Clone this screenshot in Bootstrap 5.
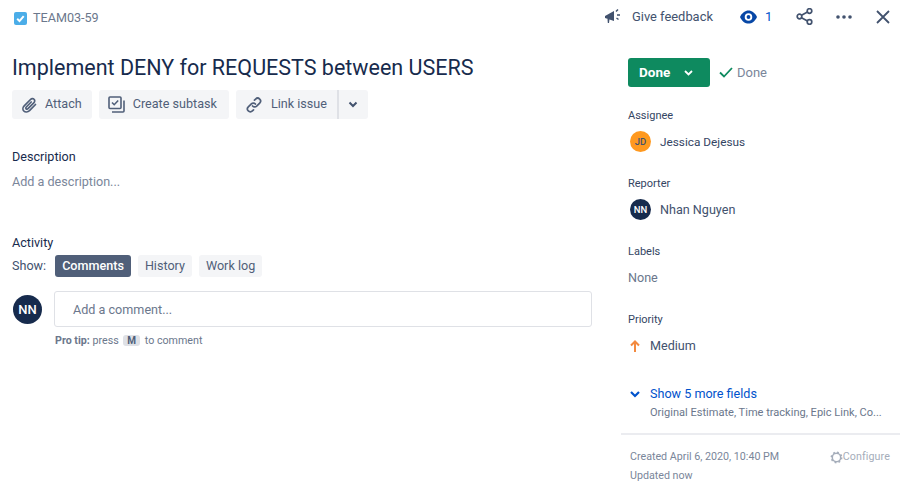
<!DOCTYPE html>
<html lang="en">
<head>
  <meta charset="UTF-8">
  <title>TEAM03-59</title>
  <link href="https://cdn.jsdelivr.net/npm/bootstrap@5.3.0/dist/css/bootstrap.min.css" rel="stylesheet">
  <style>
    html, body {
      height: 100%;
      margin: 0;
      background: #fff;
      overflow: hidden;
      font-family: Roboto, "Liberation Sans", sans-serif;
      font-size: 12.6px;
      color: #42526e;
    }
    .issue-shell { width: 911px; height: 494px; }
    .main-col { width: 621px; padding: 0 29px 0 12px; }
    .side-col { width: 279px; }

    .top-left { height: 35px; padding: 1px 0 0 2px; gap: 6px; color: #6b778c; }
    .top-right { height: 33px; margin-left: -17px; white-space: nowrap; }
    .issue-title { font-size: 21.5px; font-weight: 400; line-height: 30px; color: #172b4d; margin: 18px 0 7px; }
    .act-row { gap: 7px; }
    .act-btn {
      height: 29px;
      background: #f4f5f7;
      color: #505f79;
      border-radius: 3px;
      padding: 0 11px 0 9px;
      gap: 8px;
    }
    .btn-attach { padding-right: 10px; gap: 7px; }
    .btn-subtask { padding-right: 12px; }
    .btn-split { width: 31px; margin-left: -7px; padding: 0; justify-content: center; border-left: 2px solid #dfe1e6; border-radius: 0 3px 3px 0; }
    .link-left { border-radius: 3px 0 0 3px; padding-right: 10px; }
    .sect-head { line-height: 20px; color: #172b4d; }
    .desc-head { margin-top: 28px; }
    .hint-text { line-height: 20px; color: #7a869a; margin-top: 5px; }
    .activity-head { margin-top: 41px; }
    .show-row { gap: 7px; margin-top: 2px; }
    .show-label { line-height: 20px; color: #42526e; margin-right: 2px; }
    .tab-pill { height: 22px; line-height: 21px; padding: 0 7px; border-radius: 3px; background: #f4f5f7; color: #505f79; }
    .tab-on { background: #505f79; color: #fff; font-weight: 500; }
    .comment-row { gap: 12px; margin-top: 14px; }
    .avatar-dot { border-radius: 50%; background: #172b4d; color: #fff; flex: none; display: flex; align-items: center; justify-content: center; font-weight: 500; }
    .avatar-big { width: 29px; height: 29px; font-size: 13px; margin: 4px 0 0 1px; }
    .avatar-small { width: 21px; height: 21px; font-size: 9.500px; }
    .avatar-orange { background: #ff991f; color: #42526e; }
    .comment-box { height: 36px; border: 1px solid #dfe1e6; border-radius: 3px; padding-left: 18px; line-height: 36px; color: #6b778c; }
    .pro-tip { font-size: 10.700px; line-height: 16px; color: #6b778c; margin: 6px 0 0 1px; }
    .key-cap { background: #dfe1e6; border-radius: 3px; padding: 0 4px; font-weight: 700; font-size: 10px; margin: 0 2px; color: #505f79; }

    .fb-text { margin: 0 27px 0 10px; font-size: 12.900px; }
    .watch-count { color: #0052cc; margin: 0 24px 0 8px; font-size: 13px; }
    .ic-dots { margin-left: 23px; }
    .ic-close { margin-left: 24px; }

    .status-row { margin: 25px 0 0 7px; }
    .status-btn { width: 82px; height: 29px; background: #0e8a5f; color: #fff; border-radius: 3px; font-weight: 700; padding-left: 11px; gap: 14px; font-size: 13.500px; }
    .status-tick { margin-left: 9px; }
    .status-text { margin-left: 4px; color: #7a869a; font-size: 13px; }

    .field-list { padding-left: 7px; }
    .field-name { font-size: 11px; line-height: 16px; color: #344563; margin-top: 24px; }
    .field-first { margin-top: 21px; }
    .field-val { line-height: 20px; color: #42526e; gap: 9px; margin: 7px 0 0 2px; }
    .val-jessica { font-size: 11.800px; color: #344563; }
    .val-none { margin-left: 0; margin-top: 8px; color: #6b778c; }
    .prio-row { margin-top: 8px; gap: 10px; }
    .show-more { color: #0052cc; line-height: 20px; gap: 10px; margin: 28px 0 0 2px; }
    .more-list { font-size: 11.050px; line-height: 16px; color: #6b778c; white-space: nowrap; margin: 1px 0 0 22px; }
    .meta-foot { border-top: 2px solid #ebecf0; font-size: 10.700px; line-height: 16px; color: #7a869a; padding: 14px 10px 0 9px; margin-top: 12px; }
    .foot-second { margin-top: 3px; }
    .cfg-link { color: #a5adba; letter-spacing: .1px; }
  </style>
</head>
<body>

<div class="issue-shell d-flex">
  <!-- left column -->
  <div class="main-col">
    <div class="top-left d-flex align-items-center">
      <svg width="13" height="13" viewBox="0 0 13 13"><rect width="13" height="13" rx="2" fill="#4bade8"/><path d="M3.200 6.800l2.300 2.300 4.200-5" fill="none" stroke="#fff" stroke-width="2"/></svg>
      <span>TEAM03-59</span>
    </div>
    <h1 class="issue-title">Implement DENY for REQUESTS between USERS</h1>
    <div class="d-flex act-row">
      <div class="act-btn btn-attach d-flex align-items-center">
        <svg width="17" height="18" viewBox="0 0 17 18" fill="none" stroke="#505f79" stroke-width="1.700" stroke-linecap="round"><path d="M14.500 8.500l-6 6.200c-1.700 1.600-4.300 1.800-5.700.3-1.300-1.300-1.100-3.600.4-5.100l6.300-6.400c1.100-1.100 2.700-1.200 3.600-.2.900.9.800 2.400-.3 3.500l-5.800 5.900c-.6.600-1.400.7-1.900.2-.5-.5-.4-1.300.2-1.900l4.900-5"/></svg>
        <span>Attach</span>
      </div>
      <div class="act-btn btn-subtask d-flex align-items-center">
        <svg width="17" height="17" viewBox="0 0 17 17" fill="none" stroke="#505f79" stroke-width="1.600"><rect x="1" y="1" width="12" height="11.500" rx="1"/><path d="M4 6.500l2.200 2.200 4-4.200"/><path d="M16 4.500v10.500a1 1 0 0 1-1 1H4"/></svg>
        <span>Create subtask</span>
      </div>
      <div class="act-btn link-left d-flex align-items-center">
        <svg width="18" height="18" viewBox="0 0 19 19" fill="none" stroke="#505f79" stroke-width="1.800" stroke-linecap="round"><path d="M8 10.500a3 3 0 0 0 4.300.2l3.200-3.200a3 3 0 0 0-4.300-4.300l-1.200 1.200"/><path d="M11 8.500a3 3 0 0 0-4.300-.2l-3.200 3.200a3 3 0 0 0 4.300 4.300l1.200-1.200"/></svg>
        <span>Link issue</span>
      </div>
      <div class="act-btn btn-split d-flex align-items-center">
        <svg width="10" height="7" viewBox="0 0 10 7" fill="none" stroke="#42526e" stroke-width="2"><path d="M1.500 1.500L5 5l3.500-3.500"/></svg>
      </div>
    </div>

    <div class="sect-head desc-head">Description</div>
    <div class="hint-text">Add a description...</div>

    <div class="sect-head activity-head">Activity</div>
    <div class="d-flex align-items-center show-row">
      <span class="show-label">Show:</span>
      <span class="tab-pill tab-on">Comments</span>
      <span class="tab-pill">History</span>
      <span class="tab-pill">Work log</span>
    </div>
    <div class="d-flex comment-row">
      <div class="avatar-dot avatar-big">NN</div>
      <div class="flex-grow-1">
        <div class="comment-box">Add a comment...</div>
        <div class="pro-tip"><b>Pro tip:</b> press <span class="key-cap">M</span> to comment</div>
      </div>
    </div>
  </div>

  <!-- right column -->
  <div class="side-col">
    <div class="top-right d-flex align-items-center">
      <svg width="18" height="18" viewBox="0 0 18 18" fill="#42526e"><path d="M1 8l9-5v10L1 10z"/><path d="M3.500 11l2 0-.5 4-1.200 0z"/><path d="M12 3.500l2-2M13 7h3M12.500 10l2 1.500" stroke="#42526e" stroke-width="1.500" fill="none"/></svg>
      <span class="fb-text">Give feedback</span>
      <svg width="17" height="14" viewBox="0 0 18 14"><path d="M0 7c2-4.500 5.500-7 9-7s7 2.500 9 7c-2 4.500-5.500 7-9 7s-7-2.500-9-7z" fill="#0747a6"/><circle cx="9" cy="7" r="3" fill="none" stroke="#fff" stroke-width="2"/></svg>
      <span class="watch-count">1</span>
      <svg width="17" height="17" viewBox="0 0 17 17" fill="none" stroke="#42526e" stroke-width="1.700"><circle cx="3.500" cy="8.500" r="2.300"/><circle cx="13.500" cy="3" r="2.300"/><circle cx="13.500" cy="14" r="2.300"/><path d="M5.500 7.300l6-3.200M5.500 9.700l6 3.200"/></svg>
      <svg class="ic-dots" width="16" height="4" viewBox="0 0 16 4" fill="#42526e"><circle cx="2" cy="2" r="1.800"/><circle cx="8" cy="2" r="1.800"/><circle cx="14" cy="2" r="1.800"/></svg>
      <svg class="ic-close" width="14" height="14" viewBox="0 0 14 14" fill="none" stroke="#42526e" stroke-width="1.800"><path d="M1 1l12 12M13 1L1 13"/></svg>
    </div>

    <div class="d-flex align-items-center status-row">
      <div class="status-btn d-flex align-items-center">
        <span>Done</span>
        <svg width="9" height="6" viewBox="0 0 9 6" fill="none" stroke="#fff" stroke-width="1.800"><path d="M1 1l3.500 3.500L8 1"/></svg>
      </div>
      <svg class="status-tick" width="14" height="11" viewBox="0 0 14 11" fill="none" stroke="#0e8a5f" stroke-width="1.800"><path d="M1 5.500l4 4 8-8.500"/></svg>
      <span class="status-text">Done</span>
    </div>

    <div class="field-list">
      <div class="field-name field-first">Assignee</div>
      <div class="d-flex align-items-center field-val">
        <div class="avatar-dot avatar-small avatar-orange">JD</div><span class="val-jessica">Jessica Dejesus</span>
      </div>
      <div class="field-name">Reporter</div>
      <div class="d-flex align-items-center field-val">
        <div class="avatar-dot avatar-small">NN</div><span>Nhan Nguyen</span>
      </div>
      <div class="field-name">Labels</div>
      <div class="field-val val-none">None</div>
      <div class="field-name">Priority</div>
      <div class="d-flex align-items-center field-val prio-row">
        <svg width="10" height="12" viewBox="0 0 10 12" fill="none" stroke="#f38a3f" stroke-width="2"><path d="M5 12V2M1 5.500L5 1.500l4 4"/></svg>
        <span>Medium</span>
      </div>
      <div class="d-flex align-items-center show-more">
        <svg width="10" height="7" viewBox="0 0 10 7" fill="none" stroke="#0052cc" stroke-width="2.200"><path d="M1 1l4 4 4-4"/></svg>
        <span>Show 5 more fields</span>
      </div>
      <div class="more-list">Original Estimate, Time tracking, Epic Link, Co...</div>
    </div>

    <div class="meta-foot">
      <div class="d-flex justify-content-between">
        <span>Created April 6, 2020, 10:40 PM</span>
        <span class="d-flex align-items-center cfg-link">
          <svg width="13" height="13" viewBox="0 0 13 13" fill="none" stroke="#a5adba" stroke-width="1.500"><circle cx="6.500" cy="6.500" r="4.200"/><circle cx="6.500" cy="6.500" r="5.200" stroke-dasharray="1.800 2.280"/></svg>
          Configure
        </span>
      </div>
      <div class="foot-second">Updated now</div>
    </div>
  </div>
</div>

<script src="https://cdn.jsdelivr.net/npm/bootstrap@5.3.0/dist/js/bootstrap.bundle.min.js"></script>
</body>
</html>
